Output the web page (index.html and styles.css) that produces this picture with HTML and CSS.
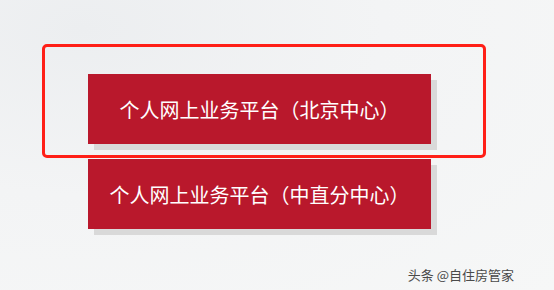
FILE: index.html
```html
<!DOCTYPE html>
<html lang="zh">
<head>
<meta charset="utf-8">
<link rel="stylesheet" href="styles.css">
</head>
<body>
<div class="page">
  <div class="highlight">
    <div class="btn">个人网上业务平台（北京中心）</div>
  </div>
  <div class="btn btn-second">个人网上业务平台（中直分中心）</div>
  <div class="watermark">头条 @自住房管家</div>
</div>
</body>
</html>
```
FILE: styles.css
```css
html, body {
  margin: 0;
  padding: 0;
}
body {
  width: 554px;
  height: 290px;
  overflow: hidden;
  background: radial-gradient(ellipse at 15% 10%, #eceef0 0%, #f3f4f5 45%, #f6f7f7 100%);
  font-family: "Noto Sans CJK SC", "Noto Sans", sans-serif;
}
.page {
  display: flex;
  flex-direction: column;
  padding-top: 44px;
  padding-left: 42px;
}
.highlight {
  box-sizing: border-box;
  width: 444px;
  height: 114px;
  border: 3px solid #ff1f17;
  border-radius: 5px;
  padding-top: 27px;
  padding-left: 43px;
}
.btn {
  box-sizing: border-box;
  width: 343px;
  height: 70px;
  background: #b9182c;
  box-shadow: 6px 6px 0 #d9d9d9;
  color: #ffffff;
  font-size: 20px;
  display: flex;
  align-items: center;
  justify-content: center;
  letter-spacing: 0;
}
.btn-second {
  margin-top: 1px;
  margin-left: 46px;
}
.watermark {
  align-self: flex-end;
  margin-right: 40px;
  margin-top: 36px;
  font-size: 13px;
  color: #4a4a4a;
}
```
